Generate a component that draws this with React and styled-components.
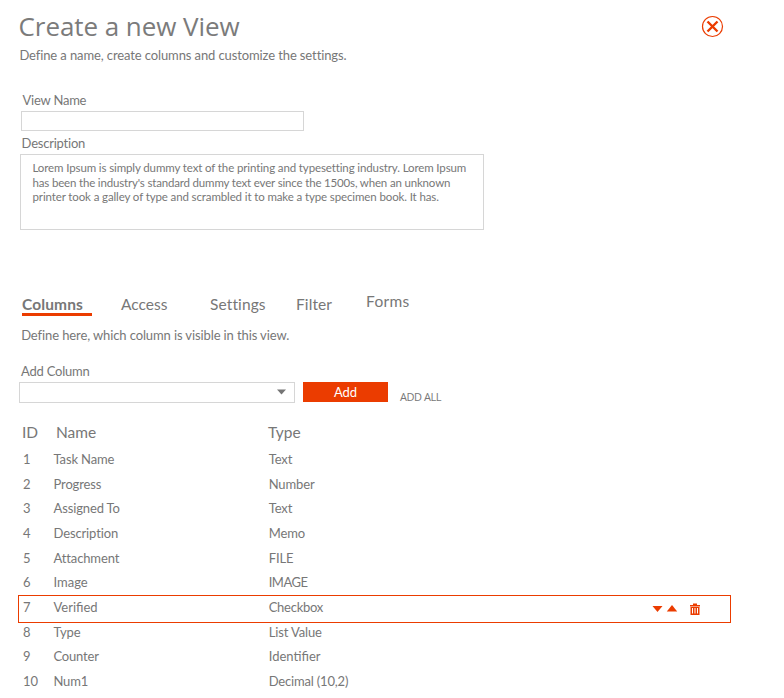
import React from 'react';
import styled, { createGlobalStyle } from 'styled-components';

const accent = '#eb3c00';

const GlobalStyle = createGlobalStyle`
  *, *::before, *::after { box-sizing: border-box; }
  html, body { margin: 0; padding: 0; background: #fff; }
  body { overflow: hidden; }
`;

const Page = styled.main`
  width: 784px;
  height: 698px;
  overflow: hidden;
  padding: 8px 53px 0 18px;
  background: #fff;
  color: #777;
  font: 13px/16px Lato, "Liberation Sans", sans-serif;
`;

const Header = styled.header`
  display: flex;
  justify-content: space-between;
  height: 84px;
`;

const Title = styled.h1`
  margin: 0 0 2px;
  padding-left: 0.5px;
  font: 400 26px/37px "Open Sans", sans-serif;
  letter-spacing: -0.06px;
  color: #7b7b7b;
`;

const Note = styled.p`
  margin: 0;
  padding-left: ${(p) => p.$indent}px;
  letter-spacing: -0.11px;
  white-space: nowrap;
`;

const CloseButton = styled.button`
  width: 23px;
  height: 23px;
  margin: 7px 7px 0 0;
  padding: 0;
  border: 0;
  background: none;
  svg { display: block; }
`;

const Label = styled.label`
  display: block;
  padding-left: ${(p) => p.$indent}px;
  letter-spacing: -0.22px;
`;

const NameInput = styled.input`
  display: block;
  width: 283px;
  height: 20px;
  margin: 3px 0 4px 3px;
  border: 1px solid #d6d6d6;
  border-radius: 0;
`;

const DescriptionBox = styled.div`
  width: 464px;
  height: 76px;
  margin: 3px 0 0 2px;
  padding: 6px 11.5px;
  border: 1px solid #d6d6d6;
  font-size: 11.5px;
  line-height: 14.6px;
`;

const Line = styled.div`
  white-space: nowrap;
  letter-spacing: ${(p) => p.$track}px;
`;

const Tabs = styled.nav`
  display: flex;
  height: 32px;
  margin: 65px 0 0 4px;
`;

const Tab = styled.a`
  height: 21px;
  width: ${(p) => p.$width}px;
  margin-right: ${(p) => p.$gap || 0}px;
  margin-top: ${(p) => (p.$raised ? -3 : 0)}px;
  border-bottom: 3px solid ${(p) => (p.$active ? accent : 'transparent')};
  font-size: 15.5px;
  line-height: 18px;
  font-weight: ${(p) => (p.$active ? 700 : 400)};
  letter-spacing: ${(p) => p.$track}px;
  white-space: nowrap;
`;

const AddLabel = styled(Label)`
  margin-top: 20px;
`;

const AddBar = styled.div`
  display: flex;
  height: 21px;
  margin: 3px 0 0 1px;
`;

const Select = styled.div`
  display: flex;
  justify-content: flex-end;
  width: 276px;
  height: 21px;
  padding: 6px 8px;
  border: 1px solid #d6d6d6;
`;

const AddButton = styled.button`
  width: 85px;
  height: 20px;
  margin-left: 8px;
  padding: 0;
  border: 0;
  background: ${accent};
  color: #fff;
  font: 13px/20px Lato, sans-serif;
`;

const AddAll = styled.a`
  margin: 7px 0 0 12px;
  font: 11px/16px "Open Sans", sans-serif;
  letter-spacing: -0.45px;
`;

const Head = styled.div`
  display: grid;
  grid-template-columns: 34px 212px 1fr;
  margin: 19px 0 7px 4px;
  font-size: 15.5px;
  line-height: 20px;
`;

const Row = styled.div`
  display: grid;
  grid-template-columns: 30.5px 215.2px 1fr auto;
  height: ${(p) => (p.$selected ? 28 : 24.65)}px;
  margin: ${(p) => (p.$selected ? '-2px 0 -1.35px' : '0')};
  padding: ${(p) => (p.$selected ? '3px 30px 0 4px' : '2px 30px 0 5px')};
  border: ${(p) => (p.$selected ? `1px solid ${accent}` : '0')};
`;

const Cell = styled.span`
  white-space: nowrap;
  letter-spacing: ${(p) => p.$track ?? -0.13}px;
`;

const Actions = styled.span`
  display: flex;
  padding-top: 3px;
  svg { display: block; }
`;

const rows = [
  ['Task Name', 'Text'],
  ['Progress', 'Number'],
  ['Assigned To', 'Text'],
  ['Description', 'Memo'],
  ['Attachment', 'FILE'],
  ['Image', 'IMAGE', 0, -0.5],
  ['Verified', 'Checkbox', 0, -0.26],
  ['Type', 'List Value'],
  ['Counter', 'Identifier', -0.2, 0],
  ['Num1', 'Decimal (10,2)', -0.2, -0.18],
];

function RowActions() {
  return (
    <Actions>
      <svg width="48" height="14" viewBox="0 0 48 14" fill={accent}>
        <path d="M0.5 4h10L5.500 10z" />
        <path d="M14.8 9.500h10.400L20 3z" />
        <path d="M41 1.500h4v1.500h3v1.500H38V3h3z" />
        <path fillRule="evenodd" d="M38.500 5h9v8h-9zM40 6v5.500h1V6zm2.500 0v5.500h1V6zM45 6v5.500h1V6z" />
      </svg>
    </Actions>
  );
}

export default function App() {
  return (
    <>
      <GlobalStyle />
      <Page>
        <Header>
          <div>
            <Title>Create a new View</Title>
            <Note $indent={1.4}>Define a name, create columns and customize the settings.</Note>
          </div>
          <CloseButton aria-label="Close">
            <svg width="23" height="23" viewBox="0 0 23 23" fill="none" stroke={accent}>
              <circle cx="11.5" cy="11.5" r="10" strokeWidth="1.2" />
              <path d="M6.500 6.500l10 10M16.500 6.500l-10 10" strokeWidth="2.4" />
            </svg>
          </CloseButton>
        </Header>

        <Label $indent={4.5}>View Name</Label>
        <NameInput />
        <Label $indent={3.6}>Description</Label>
        <DescriptionBox>
          <Line $track={-0.12}>Lorem Ipsum is simply dummy text of the printing and typesetting industry. Lorem Ipsum</Line>
          <Line $track={-0.17}>has been the industry's standard dummy text ever since the 1500s, when an unknown</Line>
          <Line $track={-0.12}>printer took a galley of type and scrambled it to make a type specimen book. It has.</Line>
        </DescriptionBox>

        <Tabs>
          <Tab $active $width={70} $gap={29} $track={0.12}>Columns</Tab>
          <Tab $width={89}>Access</Tab>
          <Tab $width={86} $track={0.12}>Settings</Tab>
          <Tab $width={70} $track={0.1}>Filter</Tab>
          <Tab $width={50} $track={0.3} $raised>Forms</Tab>
        </Tabs>
        <Note $indent={3.2}>Define here, which column is visible in this view.</Note>

        <AddLabel as="div" $indent={3}>Add Column</AddLabel>
        <AddBar>
          <Select>
            <svg width="9" height="6" viewBox="0 0 9 6" fill="#757575"><path d="M0 0.500h9L4.500 5.500z" /></svg>
          </Select>
          <AddButton>Add</AddButton>
          <AddAll>ADD ALL</AddAll>
        </AddBar>

        <Head>
          <span>ID</span>
          <span>Name</span>
          <span>Type</span>
        </Head>
        {rows.map(([name, type, nameTrack, typeTrack], i) => (
          <Row key={name} $selected={name === 'Verified'}>
            <Cell $track={0}>{i + 1}</Cell>
            <Cell $track={nameTrack}>{name}</Cell>
            <Cell $track={typeTrack}>{type}</Cell>
            {name === 'Verified' && <RowActions />}
          </Row>
        ))}
      </Page>
    </>
  );
}
